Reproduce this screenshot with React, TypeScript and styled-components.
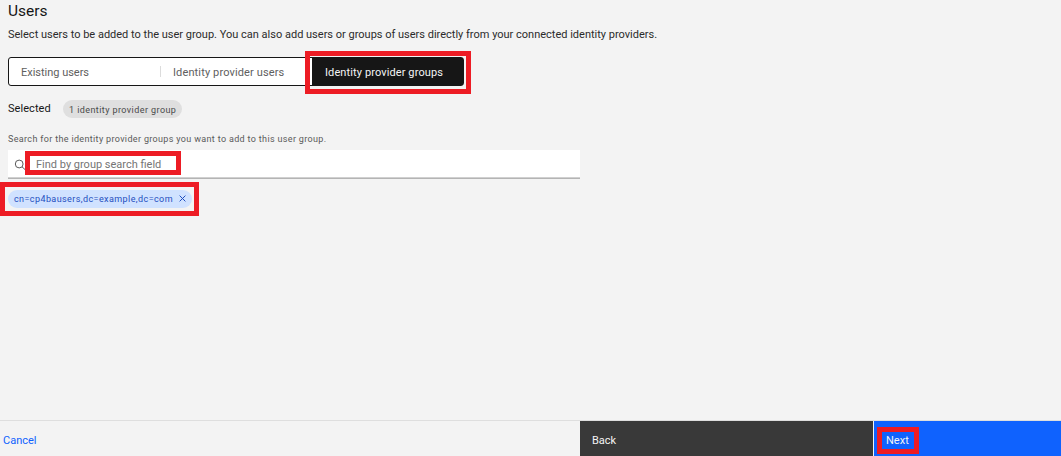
import React from "react";
import styled, { createGlobalStyle } from "styled-components";

const GlobalStyle = createGlobalStyle`
  * { box-sizing: border-box; }
  body { margin: 0; background: #f3f3f3; color: #161616; font-family: Roboto, "Liberation Sans", sans-serif; }
  button, input { font: inherit; letter-spacing: inherit; border: 0; margin: 0; }
`;

const Page = styled.div`
  display: flex;
  flex-direction: column;
  height: 456px;
  overflow: hidden;
`;

const Content = styled.main`
  flex: 1;
  padding: 0 8px;
`;

const Title = styled.h1`
  margin: 0;
  height: 24px;
  font-size: 15.5px;
  font-weight: 400;
  line-height: 23px;
`;

const Description = styled.p`
  margin: 0;
  height: 33px;
  font-size: 11px;
  line-height: 21px;
  color: #2b2b2b;
  white-space: nowrap;
`;

const Switcher = styled.div`
  position: relative;
  display: flex;
  width: 456px;
  height: 29px;
  border: 1px solid #161616;
  border-radius: 3px;
  background: #fff;
`;

const Segment = styled.button<{ $selected?: boolean; $spacing: number }>`
  flex: ${(p) => (p.$selected ? "0 0 151px" : "1 1 0")};
  padding: 1px 0 0 ${(p) => (p.$selected ? 13 : 12)}px;
  text-align: left;
  white-space: nowrap;
  font-size: 11px;
  letter-spacing: ${(p) => p.$spacing}px;
  background: ${(p) => (p.$selected ? "#161616" : "transparent")};
  color: ${(p) => (p.$selected ? "#f4f4f4" : "#606060")};
`;

const Divider = styled.span`
  align-self: center;
  width: 1px;
  height: 11px;
  background: #dcdcdc;
`;

const Highlight = styled.span<{ $x: number; $y: number; $w: number; $h: number }>`
  position: absolute;
  z-index: 2;
  left: ${(p) => p.$x}px;
  top: ${(p) => p.$y}px;
  width: ${(p) => p.$w}px;
  height: ${(p) => p.$h}px;
  border: 5px solid #ed1c24;
  pointer-events: none;
`;

const SelectedRow = styled.div`
  display: flex;
  align-items: flex-start;
  height: 45px;
  padding-top: 14px;
`;

const SelectedLabel = styled.span`
  width: 55px;
  font-size: 11px;
  line-height: 17px;
  letter-spacing: 0.05px;
`;

const CountTag = styled.span`
  width: 119px;
  height: 18px;
  border-radius: 9px;
  padding-left: 6px;
  background: #dfdfdf;
  color: #4a4a4a;
  font-size: 9px;
  line-height: 20px;
  letter-spacing: 0.42px;
  white-space: nowrap;
`;

const FieldLabel = styled.label`
  display: block;
  height: 19px;
  font-size: 9px;
  line-height: 16px;
  letter-spacing: 0.34px;
  color: #5a5a5a;
`;

const SearchField = styled.div`
  position: relative;
  display: flex;
  align-items: center;
  width: 572px;
  height: 29px;
  padding-left: 6px;
  background: #fff;
  border-bottom: 1px solid #b4b4b4;
  box-shadow: inset 0 -1px #d0d0d0;
`;

const SearchInput = styled.input`
  flex: 1;
  padding: 0;
  margin: 1px 0 0 10px;
  background: transparent;
  outline: 0;
  font-size: 11px;
  &::placeholder { color: #757575; opacity: 1; }
`;

const FilterTag = styled.div`
  position: relative;
  display: flex;
  align-items: center;
  justify-content: space-between;
  width: 184px;
  height: 18px;
  margin-top: 11px;
  padding: 0 6px 1px;
  border-radius: 9px;
  background: #d0e2ff;
  color: #1f4fc0;
  font-size: 9px;
  letter-spacing: 0.41px;
  white-space: nowrap;
`;

const Footer = styled.footer`
  display: flex;
  height: 36px;
  border-top: 1px solid #dedede;
  font-size: 11px;
`;

const FooterButton = styled.button<{ $kind: "ghost" | "secondary" | "primary" }>`
  position: relative;
  flex: ${(p) => (p.$kind === "ghost" ? "0 0 580px" : p.$kind === "secondary" ? "0 0 293px" : "1")};
  margin-left: ${(p) => (p.$kind === "primary" ? "1px" : "0")};
  padding: 3px 0 0 ${(p) => (p.$kind === "ghost" ? "3px" : "12px")};
  text-align: left;
  background: ${(p) => (p.$kind === "ghost" ? "transparent" : p.$kind === "secondary" ? "#393939" : "#0f62fe")};
  color: ${(p) => (p.$kind === "ghost" ? "#0f62fe" : "#f4f4f4")};
`;

const SearchIcon = () => (
  <svg width="12" height="12" viewBox="0 0 12 12" fill="none" stroke="#5a5a5a">
    <circle cx="5.2" cy="6" r="3.9" />
    <path d="M8 8.8 11.5 12" />
  </svg>
);

const CloseIcon = () => (
  <svg width="7" height="7" viewBox="0 0 7 7" fill="none" stroke="#1f4fc0">
    <path d="M.6.6 6.4 6.4M6.4.6.6 6.4" />
  </svg>
);

export default function App() {
  return (
    <Page>
      <GlobalStyle />
      <Content>
        <Title>Users</Title>
        <Description>
          Select users to be added to the user group. You can also add users or groups of users directly from your connected identity providers.
        </Description>
        <Switcher>
          <Segment $spacing={-0.02}>Existing users</Segment>
          <Divider />
          <Segment $spacing={0.13}>Identity provider users</Segment>
          <Segment $spacing={0.11} $selected>Identity provider groups</Segment>
          <Highlight $x={296} $y={-7} $w={166} $h={43} />
        </Switcher>
        <SelectedRow>
          <SelectedLabel>Selected</SelectedLabel>
          <CountTag>1 identity provider group</CountTag>
        </SelectedRow>
        <FieldLabel htmlFor="group-search">
          Search for the identity provider groups you want to add to this user group.
        </FieldLabel>
        <SearchField>
          <SearchIcon />
          <SearchInput id="group-search" placeholder="Find by group search field" />
          <Highlight $x={17} $y={1} $w={156} $h={24} />
        </SearchField>
        <FilterTag>
          <span>cn=cp4bausers,dc=example,dc=com</span>
          <CloseIcon />
          <Highlight $x={-8} $y={-8} $w={199} $h={34} />
        </FilterTag>
      </Content>
      <Footer>
        <FooterButton $kind="ghost">Cancel</FooterButton>
        <FooterButton $kind="secondary">Back</FooterButton>
        <FooterButton $kind="primary">
          Next
          <Highlight $x={3} $y={6} $w={42} $h={27} />
        </FooterButton>
      </Footer>
    </Page>
  );
}
